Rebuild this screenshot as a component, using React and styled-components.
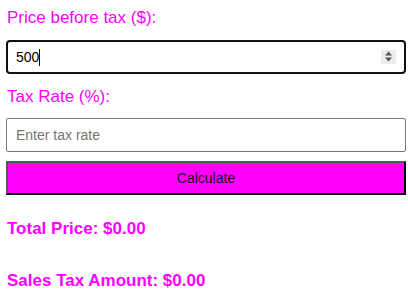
import React, { useState } from "react";
import styled, { createGlobalStyle } from "styled-components";

const Global = createGlobalStyle`
  html, body { margin: 0; padding: 0; background: #fff; }
  body { font-family: "Liberation Sans", Arial, sans-serif; }
  * { box-sizing: border-box; }
`;

const Form = styled.div`
  display: flex;
  flex-direction: column;
  padding: 8px 2px 0 6px;
`;

const Label = styled.label`
  display: block;
  color: #f0f;
  font-size: 17px;
  line-height: 19.5px;
  padding-left: 1px;
  margin-bottom: 12px;
`;

const Field = styled.div`
  position: relative;
  margin-bottom: ${(p) => p.$mb}px;
`;

const Input = styled.input`
  display: block;
  width: 100%;
  height: 34px;
  font-family: "Liberation Sans", Arial, sans-serif;
  font-size: 14px;
  color: #000;
  background: #fff;
  outline: none;
  border: ${(p) => (p.$focused ? "2px solid #101010" : "1px solid #767676")};
  border-radius: ${(p) => (p.$focused ? "4px" : "2px")};
  padding: ${(p) => (p.$focused ? "0 7px 0 8px" : "0 8px 0 9px")};
  caret-color: transparent;
  -moz-appearance: textfield;
  &::-webkit-inner-spin-button,
  &::-webkit-outer-spin-button {
    -webkit-appearance: none;
    margin: 0;
  }
  &::placeholder { color: #757575; }
`;

const Caret = styled.span`
  position: absolute;
  left: 33px;
  top: 9px;
  width: 1px;
  height: 17px;
  background: #000;
  pointer-events: none;
`;

const Spinner = styled.span`
  position: absolute;
  right: 10px;
  top: 10px;
  width: 15px;
  height: 14px;
  background: #ececec;
  display: flex;
  align-items: center;
  justify-content: center;
  pointer-events: none;
`;

const Button = styled.button`
  display: block;
  width: 100%;
  height: 34px;
  margin-top: 9px;
  background: #f0f;
  color: #111;
  font-family: "Liberation Sans", Arial, sans-serif;
  font-size: 14px;
  border-style: solid;
  border-width: 2px;
  border-color: #555 #000 #000 #555;
  cursor: pointer;
`;

const Result = styled.div`
  color: #f0f;
  font-weight: bold;
  font-size: 17px;
  line-height: 19.5px;
  padding-left: 1px;
  margin-top: ${(p) => p.$mt}px;
`;

export default function App() {
  const [price, setPrice] = useState("500");
  const [rate, setRate] = useState("");
  const [total, setTotal] = useState(0);
  const [tax, setTax] = useState(0);

  const calc = () => {
    const p = parseFloat(price) || 0;
    const r = parseFloat(rate) || 0;
    const t = (p * r) / 100;
    setTax(t);
    setTotal(p + t);
  };

  return (
    <>
      <Global />
      <Form>
        <Label htmlFor="price">Price before tax ($):</Label>
        <Field $mb={13}>
          <Input
            id="price"
            type="number"
            $focused
            value={price}
            onChange={(e) => setPrice(e.target.value)}
          />
          <Caret />
          <Spinner>
            <svg width="9" height="11" viewBox="0 0 9 11">
              <path d="M4.5 0.5 L8 4.5 H1 Z" fill="#555" />
              <path d="M1 6.5 H8 L4.5 10.5 Z" fill="#555" />
            </svg>
          </Spinner>
        </Field>
        <Label htmlFor="rate">Tax Rate (%):</Label>
        <Field $mb={0}>
          <Input
            id="rate"
            type="number"
            placeholder="Enter tax rate"
            value={rate}
            onChange={(e) => setRate(e.target.value)}
          />
        </Field>
        <Button onClick={calc}>Calculate</Button>
        <Result $mt={24}>Total Price: ${total.toFixed(2)}</Result>
        <Result $mt={32}>Sales Tax Amount: ${tax.toFixed(2)}</Result>
      </Form>
    </>
  );
}
